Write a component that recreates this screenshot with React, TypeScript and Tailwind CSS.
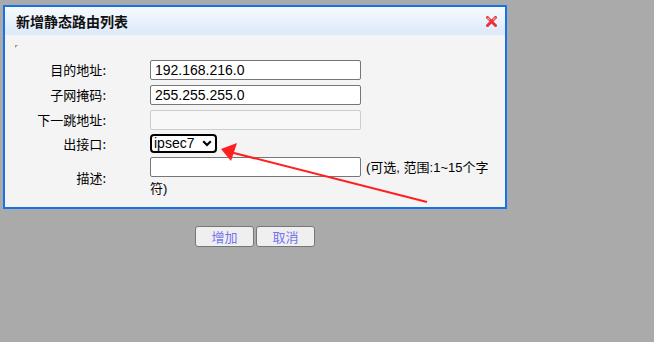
import React from 'react';

const cjk = "font-['Noto_Sans_CJK_SC','Liberation_Sans',sans-serif]";
const latin = "font-['Liberation_Sans','Noto_Sans_CJK_SC',sans-serif]";

const Row = ({ label, h, children }: { label: string; h: string; children: React.ReactNode }) => (
  <div className={`grid grid-cols-[145px_1fr] items-center ${h}`}>
    <div className={`${cjk} text-[13px] leading-[20px] text-black text-right pr-[44px]`}>{label}:</div>
    <div>{children}</div>
  </div>
);

const CloseIcon = () => (
  <svg width="11" height="11" viewBox="0 0 11 11">
    <path d="M1.5 1.5 L9.5 9.5 M9.5 1.5 L1.5 9.5" stroke="#e8333a" strokeWidth="3" strokeLinecap="square" />
    <path d="M1.5 1.5 L4 4 M9.5 1.5 L7 4" stroke="#f59a9e" strokeWidth="1.2" />
  </svg>
);

export default function App() {
  return (
    <div className={`relative w-[654px] h-[342px] bg-[#aaaaaa] overflow-hidden ${cjk}`}>
      {/* page underneath */}
      <div className="pt-[226px] pl-[195px] flex gap-[2px]">
        <button className="w-[59px] h-[21px] bg-[#efefef] border border-[#767676] rounded-[3px] text-[13px] leading-[19px] text-[#7474f0]">增加</button>
        <button className="w-[59px] h-[21px] bg-[#efefef] border border-[#767676] rounded-[3px] text-[13px] leading-[19px] text-[#7474f0]">取消</button>
      </div>

      {/* dialog */}
      <div className="absolute left-[3px] top-[5px] w-[504px] h-[204px] border-2 border-[#1672e8] bg-[#f4f4f4] flex flex-col">
        <div className="h-[28px] flex items-center justify-between pl-[11px] pr-[8px] bg-gradient-to-b from-[#f7faff] to-[#dce9f9]">
          <span className="text-[14px] font-bold text-[#111]">新增静态路由列表</span>
          <CloseIcon />
        </div>
        <div className="pt-[10px]">
          <div className="ml-[10px] w-0 h-0 border-t-[3px] border-t-[#999] border-r-[3px] border-r-transparent" />
          <div className="mt-[9px]">
            <Row label="目的地址" h="h-[25px]">
              <div className={`w-[211px] h-[20px] border border-[#767676] rounded-[2px] bg-white pl-[4px] ${latin} text-[14px] leading-[18px] text-black`}>192.168.216.0</div>
            </Row>
            <Row label="子网掩码" h="h-[25px]">
              <div className={`w-[211px] h-[20px] border border-[#767676] rounded-[2px] bg-white pl-[4px] ${latin} text-[14px] leading-[18px] text-black`}>255.255.255.0</div>
            </Row>
            <Row label="下一跳地址" h="h-[25px]">
              <div className="w-[211px] h-[20px] border border-[#cdcdcd] rounded-[2px] bg-[#f8f8f8]" />
            </Row>
            <Row label="出接口" h="h-[23px]">
              <div className={`w-[67px] h-[19px] border-2 border-black rounded-[4px] bg-white flex items-center justify-between pl-[2px] pr-[3px] ${latin} text-[14px] text-black`}>
                <span className="leading-[15px]">ipsec7</span>
                <svg width="10" height="7" viewBox="0 0 10 7">
                  <path d="M1.2 1.2 L5 5 L8.8 1.2" stroke="#000" strokeWidth="2.2" fill="none" />
                </svg>
              </div>
            </Row>
            <div className="grid grid-cols-[145px_1fr] items-center pt-[2px]">
              <div className="text-[13px] leading-[20px] text-black text-right pr-[44px]">描述:</div>
              <div className="pr-[12px] text-[13px] leading-[20px] text-black">
                <span className="inline-block align-top w-[211px] h-[20px] border border-[#767676] rounded-[2px] bg-white" />
                <span className={`${latin} ml-[5px]`}>(可选, 范围:1~15个字符)</span>
              </div>
            </div>
          </div>
        </div>
      </div>

      {/* red arrow annotation */}
      <svg className="absolute left-0 top-0" width="654" height="342" viewBox="0 0 654 342">
        <line x1="427" y1="202" x2="230" y2="152" stroke="#ff1f1f" strokeWidth="2" />
        <polygon points="221,149 237,143 231,161" fill="#ff1f1f" />
      </svg>
    </div>
  );
}
